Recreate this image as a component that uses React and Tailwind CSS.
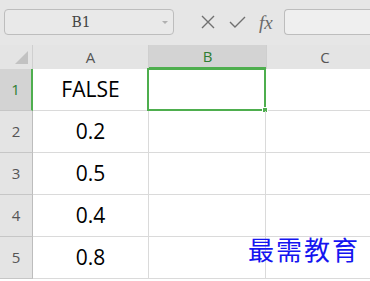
import React from "react";

const rows = ["FALSE", "0.2", "0.5", "0.4", "0.8"];

export default function App() {
  return (
    <div className="w-[370px] h-[281px] overflow-hidden bg-white relative" style={{ fontFamily: '"Open Sans", sans-serif' }}>
      {/* toolbar */}
      <div className="h-[45px] bg-[#e6e6e6] flex items-start pt-[9px] pl-[4px]">
        <div className="w-[170px] shrink-0 h-[26px] rounded-[4px] border border-[#bdbdbd] bg-[#e9e9e9] flex items-center relative">
          <span className="flex-1 text-center text-[14px] text-[#444] pr-[16px]" style={{ fontFamily: '"DejaVu Serif", serif' }}>B1</span>
          <svg className="absolute right-[5px] top-[11px]" width="6" height="4" viewBox="0 0 6 4"><path d="M0 0 L6 0 L3 3 Z" fill="#b0b0b0" /></svg>
        </div>
        <div className="flex items-center h-[26px] ml-[26px] shrink-0">
          <svg width="16" height="16" viewBox="0 0 16 16"><path d="M2 2 L14 14 M14 2 L2 14" stroke="#707070" strokeWidth="1.4" /></svg>
          <svg className="ml-[13px]" width="17" height="16" viewBox="0 0 17 16"><path d="M1 8 L6 13 L16 3" stroke="#707070" strokeWidth="1.4" fill="none" /></svg>
          <span className="ml-[13px] text-[19px] italic text-[#6a6a6a] leading-none" style={{ fontFamily: '"Liberation Serif", serif' }}>fx</span>
        </div>
        <div className="ml-[11px] h-[26px] flex-1 rounded-l-[4px] border border-r-0 border-[#bdbdbd] bg-[#efefef]" />
      </div>

      {/* header row */}
      <div className="flex h-[24px] bg-[#e4e4e4]">
        <div className="w-[33px] shrink-0 border-r border-[#cfcfcf] relative">
          <svg className="absolute left-[15px] top-[6px]" width="13" height="13" viewBox="0 0 13 13"><path d="M13 0 L13 13 L0 13 Z" fill="#c2c2c2" /></svg>
        </div>
        <div className="w-[116px] shrink-0 border-r border-[#cfcfcf] flex items-center justify-center text-[15px] text-[#555]">A</div>
        <div className="w-[117px] shrink-0 bg-[#d3d3d3] border-b-2 border-[#4eae4e] flex items-center justify-center text-[15px] text-[#2e7d32]">B</div>
        <div className="w-[117px] shrink-0 border-l border-[#cfcfcf] flex items-center justify-center text-[15px] text-[#555]">C</div>
      </div>

      {rows.map((v, i) => (
        <div key={i} className="flex h-[42px]">
          <div className={`w-[33px] shrink-0 border-r border-b flex items-center justify-center text-[15px] ${i === 0 ? "bg-[#d3d3d3] border-r-2 border-r-[#4eae4e] border-b-[#c6c6c6] text-[#2e7d32]" : "bg-[#e4e4e4] border-r-[#bdbdbd] border-b-[#c6c6c6] text-[#555]"}`}>{i + 1}</div>
          <div className="w-[116px] shrink-0 border-r border-b border-[#dadada] flex items-center justify-center text-[21px] text-black">{v}</div>
          <div className="w-[117px] shrink-0 border-r border-b border-[#dadada] relative">
            {i === 0 && (
              <div className="absolute left-[-2px] top-[-1px] w-[119px] h-[43px] border-2 border-[#4eae4e]">
                <div className="absolute right-[-4px] bottom-[-4px] w-[6px] h-[6px] bg-[#4eae4e] border border-white" />
              </div>
            )}
          </div>
          <div className="flex-1 border-b border-[#dadada]" />
        </div>
      ))}

      <div className="absolute left-[248px] top-[229px] text-[26px] text-[#1515f0] tracking-[2px]" style={{ fontFamily: '"Noto Sans CJK SC", serif' }}>最需教育</div>
    </div>
  );
}
